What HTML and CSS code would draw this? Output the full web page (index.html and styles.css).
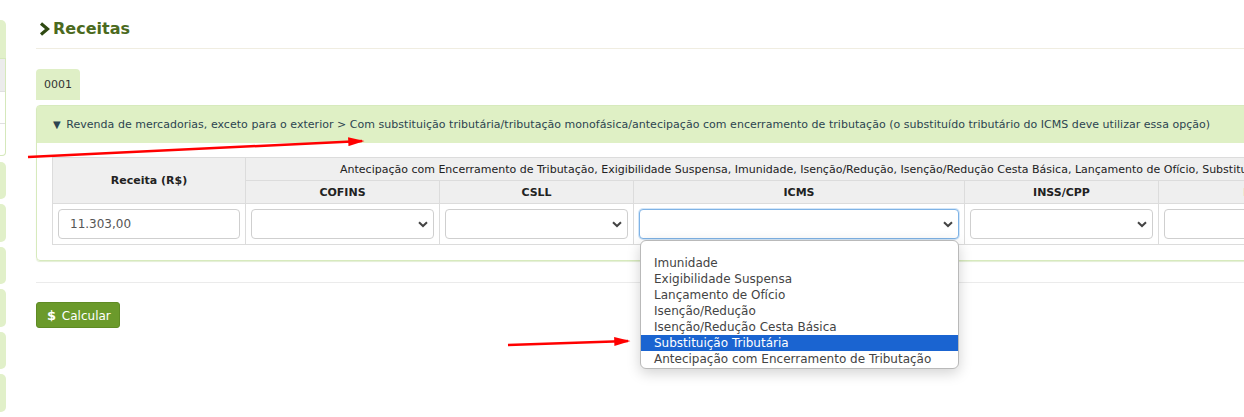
FILE: index.html
```html
<!DOCTYPE html>
<html lang="pt-BR">
<head>
  <meta charset="UTF-8">
  <meta name="viewport" content="width=device-width, initial-scale=1.0">
  <title>Receitas</title>
  <link rel="stylesheet" href="styles.css">
</head>
<body>
  <aside class="sidebar">
    <div class="side-tab side-tab-first"></div>
    <div class="side-box">
      <div class="side-row side-row-head"></div>
      <div class="side-row"></div>
      <div class="side-row"></div>
    </div>
    <div class="side-tab"></div>
    <div class="side-tab"></div>
    <div class="side-tab"></div>
    <div class="side-tab"></div>
    <div class="side-tab"></div>
    <div class="side-tab"></div>
  </aside>

  <main class="content">
    <h2 class="page-title">
      <svg class="title-icon" width="11" height="14" viewBox="0 0 11 14">
        <path d="M2 1.5 L8.5 7 L2 12.5" fill="none" stroke="#2f4a12" stroke-width="3.2"/>
      </svg>Receitas
    </h2>

    <div class="tabs">
      <span class="tab">0001</span>
    </div>

    <section class="panel">
      <div class="panel-head">
        <span class="caret">&#9660;</span>
        Revenda de mercadorias, exceto para o exterior &gt; Com substituição tributária/tributação monofásica/antecipação com encerramento de tributação (o substituído tributário do ICMS deve utilizar essa opção)
      </div>
      <div class="panel-body">
        <table class="grid">
          <colgroup>
            <col class="col-receita">
            <col class="col-tax">
            <col class="col-tax">
            <col class="col-icms">
            <col class="col-tax">
            <col class="col-tax">
            <col class="col-tax">
          </colgroup>
          <thead>
            <tr>
              <th rowspan="2">Receita (R$)</th>
              <th colspan="6" class="merged">Antecipação com Encerramento de Tributação, Exigibilidade Suspensa, Imunidade, Isenção/Redução, Isenção/Redução Cesta Básica, Lançamento de Ofício, Substituição Tributária</th>
            </tr>
            <tr>
              <th>COFINS</th>
              <th>CSLL</th>
              <th>ICMS</th>
              <th>INSS/CPP</th>
              <th>IRPJ</th>
              <th>PIS/Pasep</th>
            </tr>
          </thead>
          <tbody>
            <tr>
              <td><input class="field" type="text" value="11.303,00"></td>
              <td><div class="select"><svg class="chev" width="10" height="7" viewBox="0 0 10 7"><path d="M1 1.2 L5 5 L9 1.2" fill="none" stroke="#444" stroke-width="2"/></svg></div></td>
              <td><div class="select"><svg class="chev" width="10" height="7" viewBox="0 0 10 7"><path d="M1 1.2 L5 5 L9 1.2" fill="none" stroke="#444" stroke-width="2"/></svg></div></td>
              <td class="icms-cell">
                <div class="select select-open"><svg class="chev" width="10" height="7" viewBox="0 0 10 7"><path d="M1 1.2 L5 5 L9 1.2" fill="none" stroke="#444" stroke-width="2"/></svg></div>
                <ul class="options">
                  <li class="blank"></li>
                  <li>Imunidade</li>
                  <li>Exigibilidade Suspensa</li>
                  <li>Lançamento de Ofício</li>
                  <li>Isenção/Redução</li>
                  <li>Isenção/Redução Cesta Básica</li>
                  <li class="active">Substituição Tributária</li>
                  <li>Antecipação com Encerramento de Tributação</li>
                </ul>
              </td>
              <td><div class="select"><svg class="chev" width="10" height="7" viewBox="0 0 10 7"><path d="M1 1.2 L5 5 L9 1.2" fill="none" stroke="#444" stroke-width="2"/></svg></div></td>
              <td><div class="select"><svg class="chev" width="10" height="7" viewBox="0 0 10 7"><path d="M1 1.2 L5 5 L9 1.2" fill="none" stroke="#444" stroke-width="2"/></svg></div></td>
              <td><div class="select"><svg class="chev" width="10" height="7" viewBox="0 0 10 7"><path d="M1 1.2 L5 5 L9 1.2" fill="none" stroke="#444" stroke-width="2"/></svg></div></td>
            </tr>
          </tbody>
        </table>
      </div>
    </section>

    <hr class="divider">

    <button class="btn-calc"><b class="dollar">$</b> Calcular</button>
  </main>

  <!-- annotation arrows -->
  <svg class="marks" width="1244" height="417" viewBox="0 0 1244 417">
    <defs>
      <marker id="head" markerWidth="6.5" markerHeight="3.6" refX="5.5" refY="1.8" orient="auto" markerUnits="strokeWidth">
        <path d="M0 0 L6.5 1.8 L0 3.6 Z" fill="#f00"/>
      </marker>
    </defs>
    <line x1="28" y1="157" x2="362" y2="141" stroke="#f00" stroke-width="2.5" marker-end="url(#head)"/>
    <line x1="508" y1="345" x2="628" y2="341" stroke="#f00" stroke-width="2.5" marker-end="url(#head)"/>
  </svg>
</body>
</html>
```

FILE: styles.css
```css
body {
  margin: 0;
  font-family: Verdana, "DejaVu Sans", sans-serif;
  font-size: 11px;
  color: #333;
  background: #fff;
  display: flex;
  overflow: hidden;
  height: 417px;
  position: relative;
}

/* left navigation, scrolled almost out of view */
.sidebar {
  flex: 0 0 6px;
  display: flex;
  flex-direction: column;
  padding-top: 20px;
}

.side-tab {
  height: 40px;
  margin-bottom: 5px;
  background: #e1f0c9;
  border-radius: 0 5px 5px 0;
}

.side-tab-first {
  margin-bottom: 0;
  border-radius: 0 5px 0 0;
}

.side-box {
  border: 1px solid #d5e8bb;
  border-left: none;
  border-radius: 0 0 4px 0;
  margin-bottom: 6px;
}

.side-row {
  height: 31px;
  border-top: 1px solid #e0e0e0;
}

.side-row-head {
  background: #ececec;
  border-top: none;
  height: 32px;
}

.content {
  margin-left: 30px;
  flex: 0 0 1500px;
}

.page-title {
  margin: 19px 0 0;
  padding-bottom: 9px;
  border-bottom: 1px solid #f0ede1;
  font-family: Verdana, "DejaVu Sans", sans-serif;
  font-size: 16px;
  font-weight: bold;
  color: #4b6a1e;
  display: flex;
  align-items: center;
  gap: 3px;
  line-height: 20px;
}

.title-icon {
  margin-left: 3px;
}

.tabs {
  margin-top: 20px;
  display: flex;
}

.tab {
  background: #dfefc6;
  border-radius: 4px 4px 0 0;
  padding: 0 8px;
  height: 31px;
  line-height: 31px;
  color: #333;
}

.panel {
  margin-top: 5px;
  border: 1px solid #d7eabd;
  border-radius: 4px;
  box-shadow: 0 1px 1px #e3eed5;
}

.panel-head {
  background: #dff0c5;
  height: 37px;
  line-height: 37px;
  padding-left: 16px;
  color: #2c4450;
  white-space: nowrap;
  letter-spacing: 0.03px;
}

.caret {
  font-size: 10px;
  color: #2c4450;
  margin-right: 2px;
}

.panel-body {
  padding: 14px 15px 15px;
}

.grid {
  border-collapse: collapse;
  table-layout: fixed;
  width: 1494px;
}

.col-receita { width: 193px; }
.col-tax { width: 194px; }
.col-icms { width: 331px; }

.grid th {
  background: #efefef;
  border: 1px solid #dcdcdc;
  color: #222;
  font-weight: bold;
  height: 22px;
  padding: 0;
  text-align: center;
}

.grid th.merged {
  font-weight: normal;
  white-space: nowrap;
  text-align: left;
  padding-left: 94px;
}

.grid td {
  border: 1px solid #dcdcdc;
  padding: 5px;
  height: 30px;
}

.field,
.select {
  box-sizing: border-box;
  width: 100%;
  height: 30px;
  border: 1px solid #cfcfcf;
  border-radius: 4px;
  background: #fff;
}

.field {
  font-family: inherit;
  font-size: 12px;
  color: #555;
  padding: 0 11px;
  outline: none;
}

.select {
  display: flex;
  align-items: center;
  justify-content: flex-end;
  padding-right: 5px;
}

.select-open {
  border-color: #7fb3e6;
  box-shadow: 0 0 0 1px #d3e6f8;
}

.icms-cell {
  position: relative;
}

/* opened option list of the ICMS select */
.options {
  position: absolute;
  left: 6px;
  top: 36px;
  width: 317px;
  margin: 0;
  padding: 0 0 1px;
  list-style: none;
  background: #fff;
  border: 1px solid #b9b9b9;
  border-radius: 6px;
  box-shadow: 0 4px 14px rgba(0, 0, 0, 0.18);
  font-size: 12px;
  line-height: 16px;
  color: #444;
  z-index: 2;
}

.options li {
  padding-left: 13px;
  white-space: nowrap;
}

.options li.blank {
  height: 14px;
}

.options li.active {
  background: #1a64d1;
  color: #fff;
}

.divider {
  margin: 21px 0 0;
  border: none;
  border-top: 1px solid #ebebeb;
}

.btn-calc {
  margin-top: 19px;
  height: 26px;
  padding: 0 8px 0 10px;
  background: #6b9a2b;
  border: 1px solid #5f8b24;
  border-radius: 3px;
  color: #fff;
  font-family: Verdana, "DejaVu Sans", sans-serif;
  font-size: 12px;
  cursor: pointer;
}

.dollar {
  font-size: 13px;
  margin-right: 2px;
}

.marks {
  position: absolute;
  left: 0;
  top: 0;
  pointer-events: none;
  z-index: 5;
}
```
